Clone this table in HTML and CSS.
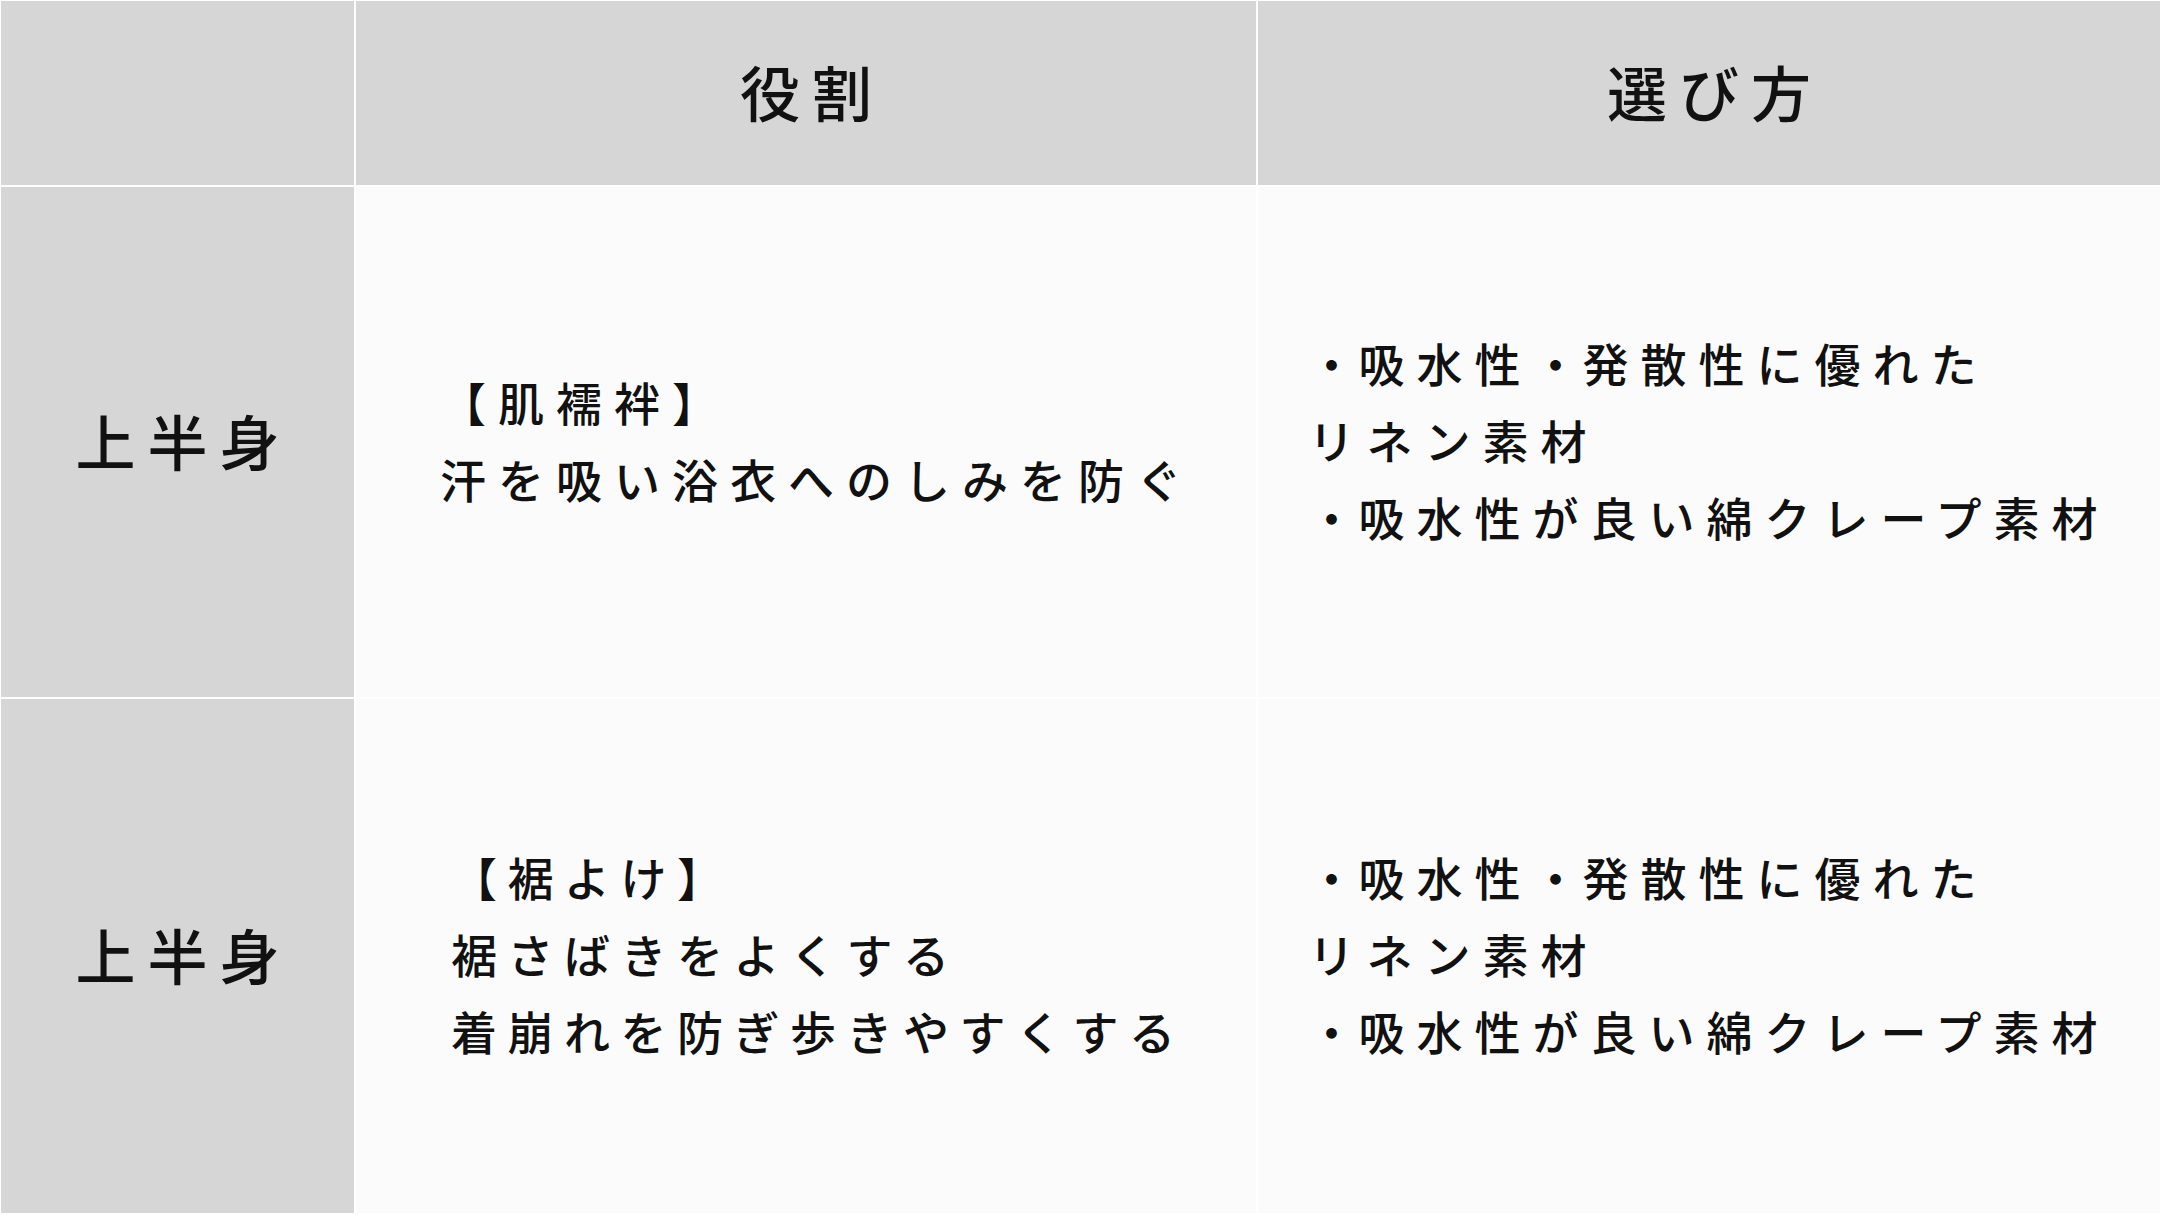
FILE: index.html
```html
<!DOCTYPE html>
<html lang="ja">
<head>
<meta charset="utf-8">
<title>肌着の役割と選び方</title>
<link rel="stylesheet" href="styles.css">
</head>
<body>
<div class="table">
  <div class="cell head corner"></div>
  <div class="cell head"><span class="title">役割</span></div>
  <div class="cell head"><span class="title">選び方</span></div>

  <div class="cell side"><span class="label">上半身</span></div>
  <div class="cell body role">
    <div class="lines">
      <p>【肌襦袢】</p>
      <p>汗を吸い浴衣へのしみを防ぐ</p>
    </div>
  </div>
  <div class="cell body choice">
    <div class="lines">
      <p><span class="dot">・</span>吸水性<span class="dot">・</span>発散性に優れた</p>
      <p>リネン素材</p>
      <p><span class="dot">・</span>吸水性が良い綿クレープ素材</p>
    </div>
  </div>

  <div class="cell side"><span class="label">上半身</span></div>
  <div class="cell body role">
    <div class="lines lines-tight">
      <p>【裾よけ】</p>
      <p>裾さばきをよくする</p>
      <p>着崩れを防ぎ歩きやすくする</p>
    </div>
  </div>
  <div class="cell body choice">
    <div class="lines">
      <p><span class="dot">・</span>吸水性<span class="dot">・</span>発散性に優れた</p>
      <p>リネン素材</p>
      <p><span class="dot">・</span>吸水性が良い綿クレープ素材</p>
    </div>
  </div>
</div>
</body>
</html>
```

FILE: styles.css
```css
* {
  box-sizing: border-box;
}

html, body {
  margin: 0;
  padding: 0;
  background: #ffffff;
}

body {
  font-family: "Noto Sans CJK JP", "Noto Sans", sans-serif;
  color: #111111;
}

.table {
  width: 2160px;
  height: 1215px;
  padding: 1px 0 2px 1px;
  display: grid;
  grid-template-columns: 353px 900px 1fr;
  grid-template-rows: 184px 510px 1fr;
  gap: 2px;
  background: #ffffff;
}

.cell {
  display: flex;
  align-items: center;
  justify-content: center;
  padding-bottom: 5px;
}

.head,
.side {
  background: #d6d6d6;
}

.body {
  background: #fbfbfb;
}

.role {
  padding-left: 10px;
}

.title,
.label {
  font-size: 60px;
  font-weight: 500;
  letter-spacing: 12px;
  margin-right: -12px;
  line-height: 1;
}

.lines {
  font-size: 46px;
  font-weight: 500;
  letter-spacing: 12px;
  line-height: 77px;
  text-align: left;
}

.role .lines {
  margin-right: -12px;
}

.role .lines-tight {
  letter-spacing: 10.5px;
  margin-right: -10.5px;
  padding-left: 4px;
}

.lines p {
  margin: 0;
  white-space: nowrap;
}

.dot {
  letter-spacing: 4px;
}
```
